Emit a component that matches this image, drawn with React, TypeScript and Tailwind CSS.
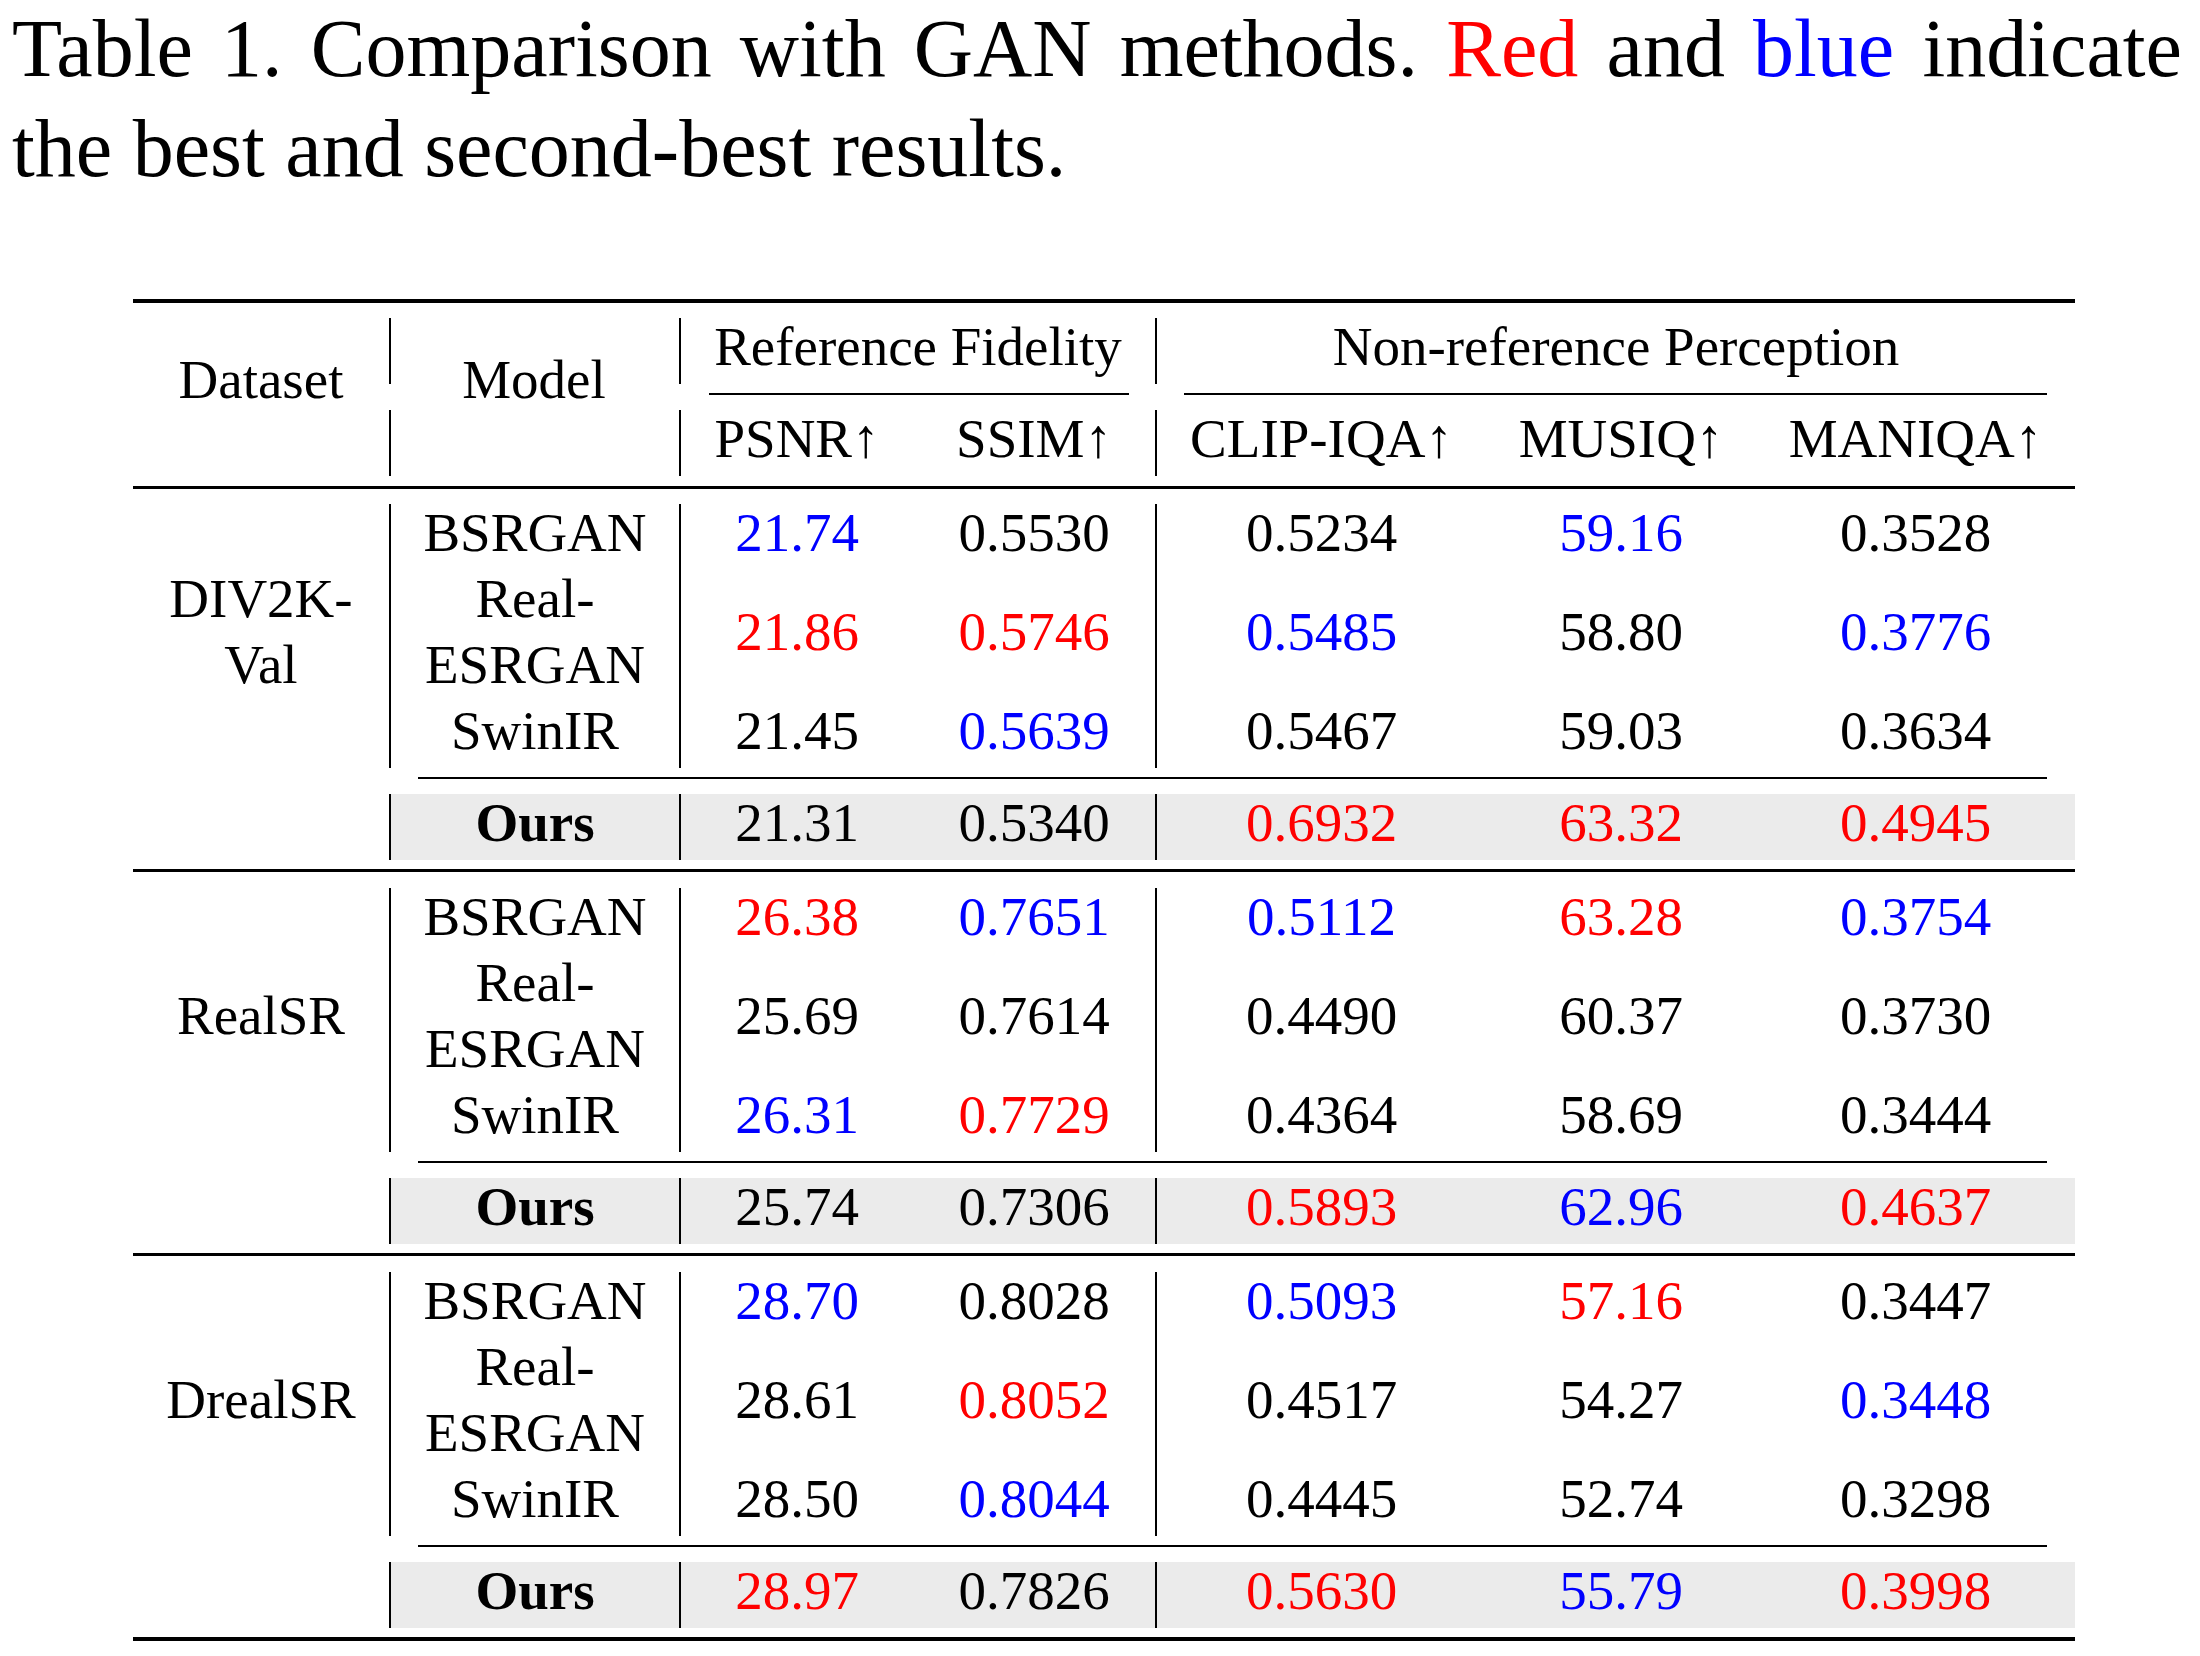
import React from "react";

type Mark = "r" | "b" | "";
type Cell = [string, Mark];

const tone: Record<Mark, string> = {
  r: "text-[#ff0000]",
  b: "text-[#0000ff]",
  "": "text-black",
};

const COLS = "grid grid-cols-[256px_290px_234px_242px_331px_270px_319px]";

type Group = {
  dataset: string[];
  rows: { model: string[]; vals: Cell[] }[];
  ours: Cell[];
};

const groups: Group[] = [
  {
    dataset: ["DIV2K-", "Val"],
    rows: [
      { model: ["BSRGAN"], vals: [["21.74", "b"], ["0.5530", ""], ["0.5234", ""], ["59.16", "b"], ["0.3528", ""]] },
      { model: ["Real-", "ESRGAN"], vals: [["21.86", "r"], ["0.5746", "r"], ["0.5485", "b"], ["58.80", ""], ["0.3776", "b"]] },
      { model: ["SwinIR"], vals: [["21.45", ""], ["0.5639", "b"], ["0.5467", ""], ["59.03", ""], ["0.3634", ""]] },
    ],
    ours: [["21.31", ""], ["0.5340", ""], ["0.6932", "r"], ["63.32", "r"], ["0.4945", "r"]],
  },
  {
    dataset: ["RealSR"],
    rows: [
      { model: ["BSRGAN"], vals: [["26.38", "r"], ["0.7651", "b"], ["0.5112", "b"], ["63.28", "r"], ["0.3754", "b"]] },
      { model: ["Real-", "ESRGAN"], vals: [["25.69", ""], ["0.7614", ""], ["0.4490", ""], ["60.37", ""], ["0.3730", ""]] },
      { model: ["SwinIR"], vals: [["26.31", "b"], ["0.7729", "r"], ["0.4364", ""], ["58.69", ""], ["0.3444", ""]] },
    ],
    ours: [["25.74", ""], ["0.7306", ""], ["0.5893", "r"], ["62.96", "b"], ["0.4637", "r"]],
  },
  {
    dataset: ["DrealSR"],
    rows: [
      { model: ["BSRGAN"], vals: [["28.70", "b"], ["0.8028", ""], ["0.5093", "b"], ["57.16", "r"], ["0.3447", ""]] },
      { model: ["Real-", "ESRGAN"], vals: [["28.61", ""], ["0.8052", "r"], ["0.4517", ""], ["54.27", ""], ["0.3448", "b"]] },
      { model: ["SwinIR"], vals: [["28.50", ""], ["0.8044", "b"], ["0.4445", ""], ["52.74", ""], ["0.3298", ""]] },
    ],
    ours: [["28.97", "r"], ["0.7826", ""], ["0.5630", "r"], ["55.79", "b"], ["0.3998", "r"]],
  },
];

// one text line of the table: 66px tall, baseline ~48px from the top
function Line({ children, className = "" }: { children: React.ReactNode; className?: string }) {
  return <div className={`h-[66px] leading-[58px] whitespace-nowrap ${className}`}>{children}</div>;
}

function GroupBlock({ group }: { group: Group }) {
  return (
    <div className="pt-[15px]">
      <div className={`${COLS} grid-rows-[66px_132px_66px]`}>
        <div className="row-span-3 flex flex-col items-center justify-center">
          {group.dataset.map((d) => (
            <Line key={d}>{d}</Line>
          ))}
        </div>
        {group.rows.map((row) => {
          const h = row.model.length > 1 ? "h-[132px]" : "h-[66px]";
          return (
            <React.Fragment key={row.model.join("")}>
              <div className={`${h} flex flex-col items-center justify-center border-l-2 border-black`}>
                {row.model.map((m) => (
                  <Line key={m}>{m}</Line>
                ))}
              </div>
              {row.vals.map(([v, m], i) => (
                <div
                  key={i}
                  className={`${h} flex items-center justify-center ${i === 0 || i === 2 ? "border-l-2 border-black" : ""}`}
                >
                  <Line className={tone[m]}>{v}</Line>
                </div>
              ))}
            </React.Fragment>
          );
        })}
      </div>

      <div className="pt-[9px] pb-[15px] pl-[285px] pr-[28px]">
        <div className="h-[2px] bg-black" />
      </div>

      <div className={COLS}>
        <div />
        <div className="border-l-2 border-black bg-[#ebebeb] text-center font-bold">
          <Line>Ours</Line>
        </div>
        {group.ours.map(([v, m], i) => (
          <div
            key={i}
            className={`bg-[#ebebeb] text-center ${i === 0 || i === 2 ? "border-l-2 border-black" : ""}`}
          >
            <Line className={tone[m]}>{v}</Line>
          </div>
        ))}
      </div>
    </div>
  );
}

export default function App() {
  return (
    <div className="min-h-screen bg-white font-['Liberation_Serif',serif] text-black">
      <p className="ml-[12px] -mt-[1px] w-[2170px] text-justify text-[82px] leading-[100px]">
        Table 1. Comparison with GAN methods. <span className="text-[#ff0000]">Red</span> and{" "}
        <span className="text-[#0000ff]">blue</span> indicate the best and second-best results.
      </p>

      <div className="ml-[133px] mt-[100px] w-[1942px] text-[55px]">
        <div className="h-[4px] bg-black" />

        <div className={`${COLS} grid-rows-[66px_26px_66px] mt-[15px] text-center`}>
          <div className="col-start-1 row-start-1 row-span-3 pt-[33px]">
            <Line>Dataset</Line>
          </div>
          <div className="col-start-2 row-start-1 border-l-2 border-black" />
          <div className="col-start-2 row-start-3 border-l-2 border-black" />
          <div className="col-start-2 row-start-1 row-span-3 pt-[33px]">
            <Line>Model</Line>
          </div>

          <div className="col-start-3 col-span-2 row-start-1 border-l-2 border-black">
            <Line>Reference Fidelity</Line>
          </div>
          <div className="col-start-5 col-span-3 row-start-1 border-l-2 border-black">
            <Line>Non-reference Perception</Line>
          </div>

          <div className="col-start-3 col-span-2 row-start-2 pt-[9px] pl-[30px] pr-[26px]">
            <div className="h-[2px] bg-black" />
          </div>
          <div className="col-start-5 col-span-3 row-start-2 pt-[9px] pl-[29px] pr-[28px]">
            <div className="h-[2px] bg-black" />
          </div>

          <div className="col-start-3 row-start-3 border-l-2 border-black">
            <Line>PSNR↑</Line>
          </div>
          <div className="col-start-4 row-start-3">
            <Line>SSIM↑</Line>
          </div>
          <div className="col-start-5 row-start-3 border-l-2 border-black">
            <Line>CLIP-IQA↑</Line>
          </div>
          <div className="col-start-6 row-start-3">
            <Line>MUSIQ↑</Line>
          </div>
          <div className="col-start-7 row-start-3">
            <Line>MANIQA↑</Line>
          </div>
        </div>

        <div className="mt-[10px] h-[3px] bg-black" />

        {groups.map((g, i) => (
          <React.Fragment key={g.dataset.join("")}>
            <GroupBlock group={g} />
            {i < groups.length - 1 ? (
              <div className="mt-[9px] mb-[1px] h-[3px] bg-black" />
            ) : (
              <div className="mt-[9px] h-[4px] bg-black" />
            )}
          </React.Fragment>
        ))}
      </div>
    </div>
  );
}
